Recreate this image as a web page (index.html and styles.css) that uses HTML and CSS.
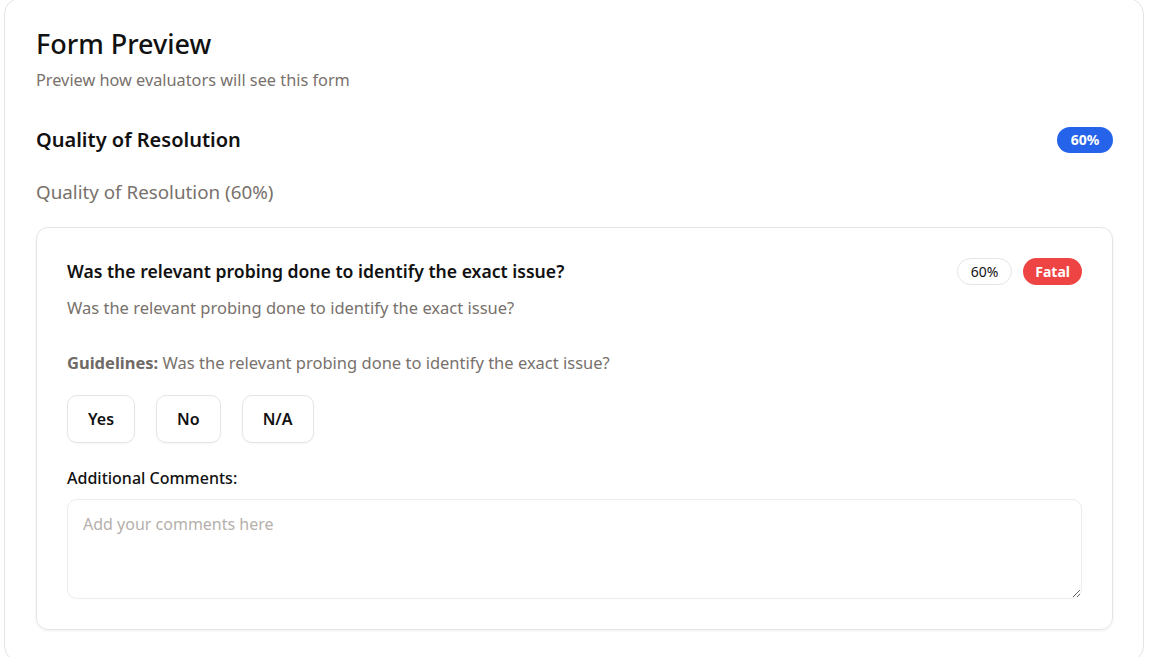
FILE: index.html
```html
<!DOCTYPE html>
<html lang="en">
<head>
<meta charset="utf-8">
<title>Form Preview</title>
<link rel="stylesheet" href="styles.css">
</head>
<body>
<div class="page">
  <section class="card">
    <header class="card-head">
      <h1 class="title">Form Preview</h1>
      <p class="subtitle">Preview how evaluators will see this form</p>
    </header>

    <div class="section-row">
      <h2 class="section-title">Quality of Resolution</h2>
      <span class="pill pill-blue">60%</span>
    </div>
    <p class="section-sub">Quality of Resolution (60%)</p>

    <div class="question">
      <div class="q-head">
        <h3 class="q-title">Was the relevant probing done to identify the exact issue?</h3>
        <div class="q-badges">
          <span class="pill pill-outline">60%</span>
          <span class="pill pill-red">Fatal</span>
        </div>
      </div>
      <p class="q-desc">Was the relevant probing done to identify the exact issue?</p>
      <p class="q-guide"><strong>Guidelines:</strong> Was the relevant probing done to identify the exact issue?</p>
      <div class="options">
        <button class="opt" type="button">Yes</button>
        <button class="opt" type="button">No</button>
        <button class="opt" type="button">N/A</button>
      </div>
      <label class="c-label" for="comments">Additional Comments:</label>
      <textarea id="comments" class="comments" placeholder="Add your comments here"></textarea>
    </div>
  </section>
</div>
</body>
</html>
```

FILE: styles.css
```css
* { box-sizing: border-box; }

html, body {
  margin: 0;
  padding: 0;
  background: #ffffff;
  overflow: hidden;
}

body {
  font-family: "Noto Sans", "Open Sans", sans-serif;
  color: #111111;
}

.page {
  padding-left: 4px;
  margin-top: -2px;
}

.card {
  width: 1140px;
  height: 664px;
  border: 1px solid #e4e4e4;
  border-radius: 16px;
  padding: 29px 30px 0 31px;
  background: #ffffff;
}

.card-head {
  display: flex;
  flex-direction: column;
  gap: 8px;
}

.title {
  margin: 0;
  font-size: 27px;
  line-height: 32px;
  font-weight: 500;
  color: #111111;
}

.subtitle {
  margin: 0;
  font-size: 16.3px;
  line-height: 24px;
  color: #78716c;
}

.section-row {
  margin-top: 34px;
  display: flex;
  align-items: center;
  justify-content: space-between;
  height: 28px;
}

.section-title {
  margin: 0;
  font-size: 20px;
  line-height: 28px;
  font-weight: 600;
  color: #111111;
}

.pill {
  display: inline-flex;
  align-items: center;
  justify-content: center;
  height: 26px;
  padding: 0 12px;
  border-radius: 999px;
  font-size: 14px;
  line-height: 20px;
}

.pill-blue {
  padding: 0 13.5px;
  background: #2563eb;
  color: #ffffff;
  font-weight: 700;
}

.pill-outline {
  height: 27px;
  padding: 0 13px;
  border: 1px solid #e5e5e5;
  color: #111111;
  background: #ffffff;
}

.pill-red {
  height: 27px;
  background: #ef4444;
  color: #ffffff;
  font-weight: 700;
}

.section-sub {
  margin: 24px 0 0;
  font-size: 18.8px;
  line-height: 28px;
  color: #78716c;
}

.question {
  margin-top: 21px;
  border: 1px solid #e5e5e5;
  border-radius: 12px;
  padding: 30px;
  box-shadow: 0 1px 3px rgba(0, 0, 0, 0.06);
  display: flex;
  flex-direction: column;
}

.q-head {
  display: flex;
  align-items: center;
  justify-content: space-between;
  height: 27px;
}

.q-title {
  margin: 0;
  font-size: 17.6px;
  line-height: 27px;
  font-weight: 600;
  color: #111111;
}

.q-badges {
  display: flex;
  gap: 11px;
}

.q-desc {
  margin: 11px 0 0;
  font-size: 16.5px;
  line-height: 24px;
  color: #78716c;
}

.q-guide {
  margin: 31px 0 0;
  font-size: 16.5px;
  line-height: 24px;
  color: #78716c;
}

.q-guide strong {
  font-weight: 700;
  color: #706a66;
}

.options {
  margin-top: 20px;
  display: flex;
  gap: 21px;
}

.opt {
  height: 48px;
  padding: 0 20px;
  border: 1px solid #e5e5e5;
  border-radius: 10px;
  background: #ffffff;
  font-family: inherit;
  font-size: 16px;
  font-weight: 600;
  color: #111111;
  box-shadow: 0 1px 2px rgba(0, 0, 0, 0.04);
}

.c-label {
  margin-top: 23px;
  font-size: 16px;
  line-height: 24px;
  font-weight: 500;
  color: #111111;
}

.comments {
  margin-top: 9px;
  height: 100px;
  width: 100%;
  border: 1px solid #ececec;
  border-radius: 10px;
  padding: 12px 16px 12px 15px;
  font-family: inherit;
  font-size: 16px;
  line-height: 24px;
  color: #111111;
  resize: vertical;
  outline: none;
}

.comments::placeholder {
  color: #b5b0ac;
}
```
